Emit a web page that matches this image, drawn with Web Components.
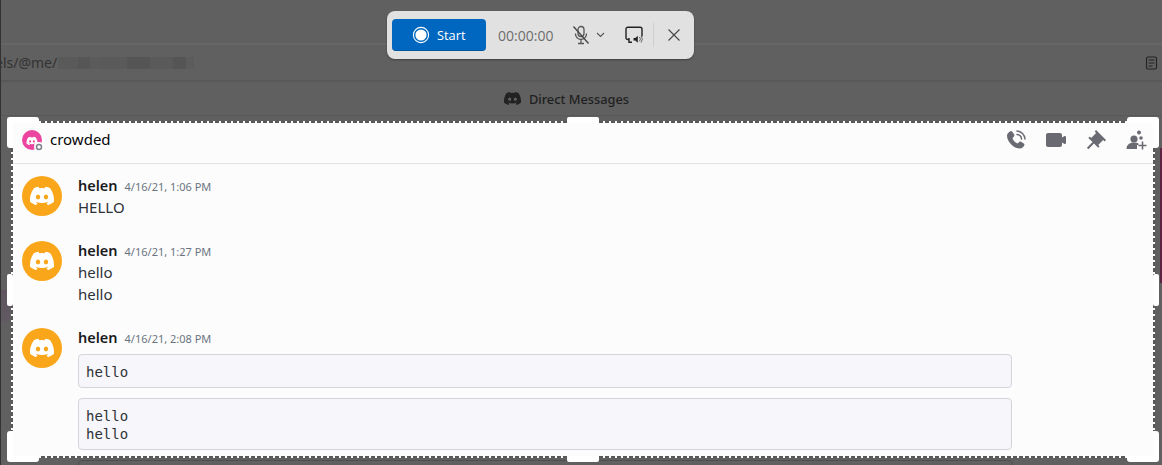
<!doctype html>
<html>
<head>
<meta charset="utf-8">
<title>crowded</title>
<style>
html, body { margin: 0; padding: 0; background: #606060; }
body { font-family: "Noto Sans", "Open Sans", sans-serif; }
</style>
</head>
<body>
<capture-screen>
    <page-backdrop></page-backdrop>
    <capture-selection>
        <chat-header slot="header" title-text="crowded"></chat-header>
        <chat-message name="helen" time="4/16/21, 1:06 PM">HELLO</chat-message>
        <chat-message name="helen" time="4/16/21, 1:27 PM">hello<br>hello</chat-message>
        <chat-message name="helen" time="4/16/21, 2:08 PM">
            <code-block>hello</code-block>
            <code-block>hello<br>hello</code-block>
        </chat-message>
    </capture-selection>
    <capture-toolbar></capture-toolbar>
</capture-screen>

<script>
const CLYDE = 'M20.317 4.37a19.791 19.791 0 0 0-4.885-1.515.074.074 0 0 0-.079.037c-.21.375-.444.864-.608 1.25a18.27 18.27 0 0 0-5.487 0 12.64 12.64 0 0 0-.617-1.25.077.077 0 0 0-.079-.037A19.736 19.736 0 0 0 3.677 4.37a.07.07 0 0 0-.032.027C.533 9.046-.32 13.58.099 18.057a.082.082 0 0 0 .031.057 19.9 19.9 0 0 0 5.993 3.03.078.078 0 0 0 .084-.028 14.09 14.09 0 0 0 1.226-1.994.076.076 0 0 0-.041-.106 13.107 13.107 0 0 1-1.872-.892.077.077 0 0 1-.008-.128 10.2 10.2 0 0 0 .372-.292.074.074 0 0 1 .077-.01c3.928 1.793 8.18 1.793 12.062 0a.074.074 0 0 1 .078.01c.12.098.246.198.373.292a.077.077 0 0 1-.006.127 12.299 12.299 0 0 1-1.873.892.077.077 0 0 0-.041.107c.36.698.772 1.362 1.225 1.993a.076.076 0 0 0 .084.028 19.839 19.839 0 0 0 6.002-3.03.077.077 0 0 0 .032-.054c.5-5.177-.838-9.674-3.549-13.66a.061.061 0 0 0-.031-.03zM8.02 15.33c-1.183 0-2.157-1.085-2.157-2.419 0-1.333.956-2.419 2.157-2.419 1.21 0 2.176 1.096 2.157 2.42 0 1.333-.956 2.418-2.157 2.418zm7.975 0c-1.183 0-2.157-1.085-2.157-2.419 0-1.333.955-2.419 2.157-2.419 1.21 0 2.176 1.096 2.157 2.42 0 1.333-.946 2.418-2.157 2.418z';

// root canvas, everything else sits on it
class CaptureScreen extends HTMLElement {
    constructor() {
        super();
        this.attachShadow({mode: 'open'});
        this.shadowRoot.innerHTML = `
            <style>
            :host {
                display: block;
                position: relative;
                width: 1162px;
                height: 465px;
                overflow: hidden;
                background: #606060;
            }
            </style>
            <slot></slot>
        `;
    }
}

// the dimmed browser window behind the capture overlay
class PageBackdrop extends HTMLElement {
    constructor() {
        super();
        this.attachShadow({mode: 'open'});
        const cells = [[20,'#5a5a5a'],[12,'#565656'],[10,'#5b5b5b'],[27,'#5a5a5a'],[23,'#555'],[23,'#5a5a5a'],[13,'#555'],[8,'#5c5c5c']];
        const mosaic = cells.map(c => `<i style="width:${c[0]}px;background:${c[1]}"></i>`).join('');
        this.shadowRoot.innerHTML = `
            <style>
            :host {
                display: flex;
                flex-direction: column;
                position: relative;
                height: 465px;
                background: #606060;
                border-left: 1px solid #333;
                box-sizing: border-box;
                color: #242424;
            }
            .top { height: 43px; flex: none; }
            .address {
                height: 39px;
                flex: none;
                box-sizing: border-box;
                border-top: 2px solid #666;
                border-bottom: 2px solid #585858;
                display: flex;
                align-items: center;
                font-size: 14px;
                overflow: hidden;
            }
            .url { margin-left: -6px; color: #333; }
            .mosaic { display: flex; height: 12px; margin-left: 1px; }
            .mosaic i { display: block; height: 12px; }
            .notes { margin-left: auto; margin-right: 3px; display: block; }
            .title {
                height: 34px;
                flex: none;
                box-sizing: border-box;
                border-bottom: 1px solid #585858;
                padding-right: 30px;
                display: flex;
                align-items: center;
                justify-content: center;
                gap: 8px;
                font-size: 12.8px;
                font-weight: 500;
                color: #1f1f1f;
            }
            .title svg { display: block; margin-top: -1px; }
            .rest { flex: 1; padding: 344px 149px 0 77px; overflow: hidden; }
            .ghost { height: 20px; border: 1px solid #4e4e4e; border-radius: 4px; }
            /* bits of the window behind showing through at the edges */
            .tint-l { position: absolute; left: 0; top: 290px; width: 9px; height: 32px; background: linear-gradient(#5f5560, #615a62); }
            .tint-r { position: absolute; right: 0; top: 148px; width: 2px; height: 135px; background: #5b2440; }
            </style>
            <div class="top"></div>
            <div class="address">
                <span class="url">els/@me/</span>
                <span class="mosaic">${mosaic}</span>
                <svg class="notes" width="14" height="14" viewBox="0 0 14 14" fill="none" stroke="#222" stroke-width="1.1">
                    <rect x="1.5" y="1" width="10" height="12" rx="1.5"/>
                    <path d="M3.5 4h6M3.500 7h6M3.500 10h4"/>
                </svg>
            </div>
            <div class="title">
                <svg width="17" height="17" viewBox="0 0 24 24" fill="#222"><path d="${CLYDE}"/></svg>
                <span>Direct Messages</span>
            </div>
            <div class="rest"><div class="ghost"></div></div>
            <div class="tint-l"></div>
            <div class="tint-r"></div>
        `;
    }
}

// Snipping tool bar floating over the capture
class CaptureToolbar extends HTMLElement {
    constructor() {
        super();
        this.attachShadow({mode: 'open'});
        this.shadowRoot.innerHTML = `
            <style>
            :host {
                position: absolute;
                left: 387px;
                top: 11px;
                width: 307px;
                height: 48px;
                box-sizing: border-box;
                padding: 0 0 0 5px;
                display: flex;
                align-items: center;
                background: #e1e1e1;
                border-radius: 8px;
                box-shadow: 0 1px 2px rgba(0,0,0,.35);
                font-family: "Open Sans", "Noto Sans", sans-serif;
            }
            .start {
                width: 94px;
                height: 32px;
                box-sizing: border-box;
                display: flex;
                align-items: center;
                padding-left: 20px;
                gap: 7px;
                background: #0067c0;
                border-radius: 4px;
                border-bottom: 1px solid #00569f;
                color: #fff;
                font-size: 12.8px;
            }
            .start svg { display: block; }
            .timer { margin-left: 12px; width: 56px; color: #6e6e6e; font-size: 14px; white-space: nowrap; }
            .mic { margin-left: 18px; display: block; }
            .chev { margin-left: 6px; display: block; }
            .screen { margin-left: 20px; display: block; }
            .sep { margin-left: 10px; width: 1px; height: 24px; background: #cfcfcf; }
            .close { margin-left: 13px; display: block; }
            </style>
            <div class="start">
                <svg width="18" height="18" viewBox="0 0 18 18">
                    <circle cx="9" cy="9" r="7.6" fill="none" stroke="#fff" stroke-width="1.1"/>
                    <circle cx="9" cy="9" r="5.6" fill="#fff"/>
                </svg>
                <span>Start</span>
            </div>
            <span class="timer">00:00:00</span>
            <svg class="mic" width="18" height="20" viewBox="0 0 18 20" fill="none" stroke="#555" stroke-width="1.3">
                <rect x="6" y="1.5" width="6" height="10" rx="3"/>
                <path d="M3.5 8.5v.5a5.5 5.5 0 0 0 11 0v-.5M9 14.5v3.500M6 18.500h6"/>
                <path d="M1.500 1.500l15 17" stroke="#444"/>
            </svg>
            <svg class="chev" width="9" height="6" viewBox="0 0 9 6" fill="none" stroke="#555" stroke-width="1.1"><path d="M1 1l3.500 3.500L8 1"/></svg>
            <svg class="screen" width="18" height="18" viewBox="0 0 18 18" fill="none" stroke="#222" stroke-width="1.4">
                <path d="M4 13.500H2.800A1.800 1.800 0 0 1 1 11.700V3a1.800 1.800 0 0 1 1.800-1.800h12.400A1.800 1.800 0 0 1 17 3v7.500"/>
                <path d="M4 12v4.300h3"/>
                <path d="M8.500 12h1.800l2.500-2.200v6.900l-2.500-2.200H8.500z" fill="#222" stroke="none"/>
                <path d="M14.300 11a3 3 0 0 1 0 4.400M16 10a5 5 0 0 1 0 6.500" stroke="#666" stroke-width="1"/>
            </svg>
            <span class="sep"></span>
            <svg class="close" width="14" height="14" viewBox="0 0 14 14" fill="none" stroke="#444" stroke-width="1.1"><path d="M1.500 1.500l11 11M12.500 1.500l-11 11"/></svg>
        `;
    }
}

// dashed selection rectangle with its white grab handles
class CaptureSelection extends HTMLElement {
    constructor() {
        super();
        this.attachShadow({mode: 'open'});
        this.shadowRoot.innerHTML = `
            <style>
            :host {
                position: absolute;
                left: 11px;
                top: 121px;
                width: 1144px;
                height: 337px;
                box-sizing: border-box;
                padding: 2px;
                background:
                    repeating-linear-gradient(90deg, #585858 0 4px, transparent 4px 6px) top / 100% 2px no-repeat,
                    repeating-linear-gradient(90deg, #585858 0 4px, transparent 4px 6px) bottom / 100% 2px no-repeat,
                    repeating-linear-gradient(0deg, #585858 0 4px, transparent 4px 6px) left / 2px 100% no-repeat,
                    repeating-linear-gradient(0deg, #585858 0 4px, transparent 4px 6px) right / 2px 100% no-repeat,
                    #fcfcfd;
                color: #2e3338;
                font-family: "Noto Sans", "Open Sans", sans-serif;
            }
            .clip { height: 100%; overflow: hidden; }
            .list { padding: 10px 0 0 9px; display: flex; flex-direction: column; gap: 21px; }
            .h { position: absolute; background: #fff; border-radius: 2px; }
            .c { position: absolute; width: 32px; height: 31px; box-sizing: border-box; border: 0 solid #fff; border-radius: 3px; }
            .tl { left: -4px; top: -4px; border-width: 6px 0 0 6px; }
            .tr { right: -4px; top: -4px; border-width: 6px 6px 0 0; }
            .bl { left: -4px; bottom: -4px; border-width: 0 0 6px 6px; }
            .br { right: -4px; bottom: -4px; border-width: 0 6px 6px 0; }
            .mt { left: 556px; top: -4px; width: 32px; height: 6px; }
            .mb { left: 556px; bottom: -4px; width: 32px; height: 6px; }
            .ml { left: -4px; top: 153px; width: 6px; height: 32px; }
            .mr { right: -4px; top: 153px; width: 6px; height: 32px; }
            </style>
            <div class="clip">
                <slot name="header"></slot>
                <div class="list"><slot></slot></div>
            </div>
            <div class="c tl"></div><div class="c tr"></div><div class="c bl"></div><div class="c br"></div>
            <div class="h mt"></div><div class="h mb"></div><div class="h ml"></div><div class="h mr"></div>
        `;
    }
}

class ChatHeader extends HTMLElement {
    constructor() {
        super();
        this.attachShadow({mode: 'open'});
        this.shadowRoot.innerHTML = `
            <style>
            :host {
                display: flex;
                align-items: center;
                height: 41px;
                box-sizing: border-box;
                padding: 0 5px 7px 9px;
                border-bottom: 1px solid #e2e2e4;
                color: #060607;
            }
            .badge { position: relative; width: 20px; height: 20px; flex: none; }
            .badge svg { display: block; overflow: visible; }
            .name { margin-left: 8px; margin-top: -1px; font-size: 15px; font-weight: 400; }
            .tools { margin-left: auto; display: flex; gap: 16px; }
            .tools svg { display: block; width: 24px; height: 24px; fill: #6a6a73; }
            </style>
            <div class="badge">
                <svg width="20" height="20" viewBox="0 0 20 20">
                    <circle cx="10" cy="10" r="10" fill="#eb459f"/>
                    <svg x="4.5" y="5.500" width="11" height="11" viewBox="0 0 24 24"><path fill="#fff" d="${CLYDE}"/></svg>
                    <circle cx="17" cy="17" r="5" fill="#fcfcfd"/>
                    <circle cx="17" cy="17" r="2.500" fill="none" stroke="#80848e" stroke-width="1.500"/>
                </svg>
            </div>
            <span class="name">${this.getAttribute('title-text')}</span>
            <div class="tools">
                <svg viewBox="0 0 24 24">
                    <path d="M6.600 3.200c.6-.3 1.300-.1 1.700.5l1.900 2.900c.3.5.3 1.100-.1 1.600L8.900 9.700c-.3.3-.3.7-.2 1 .8 2 2.400 3.700 4.400 4.600.4.2.8.1 1.100-.2l1.300-1.300c.5-.4 1.100-.5 1.600-.1l2.700 1.800c.6.4.8 1.100.5 1.700-.8 1.900-2.300 3.300-4.500 3.300C9.700 20.500 3 13.600 3 7.700c0-2 1.700-3.700 3.600-4.500z"/>
                    <path d="M13 3a8.500 8.500 0 0 1 8 8M13 6.500a5 5 0 0 1 4.500 4.500" fill="none" stroke="#6a6a73" stroke-width="1.500" stroke-linecap="round"/>
                </svg>
                <svg viewBox="0 0 24 24"><path d="M21.526 8.149C21.231 7.966 20.862 7.951 20.553 8.105L18 9.382V7C18 5.897 17.103 5 16 5H4C2.897 5 2 5.897 2 7V17C2 18.104 2.897 19 4 19H16C17.103 19 18 18.104 18 17V14.618L20.553 15.894C20.694 15.965 20.847 16 21 16C21.183 16 21.365 15.949 21.526 15.851C21.820 15.668 22 15.347 22 15V9C22 8.653 21.820 8.332 21.526 8.149Z"/></svg>
                <svg viewBox="0 0 24 24"><path d="M22 12L12.101 2.10101L10.686 3.51401L12.101 4.92901L7.15096 9.87801V9.88001L5.73596 8.46501L4.32196 9.88001L8.56496 14.122L2.90796 19.778L4.32196 21.192L9.97896 15.536L14.222 19.778L15.636 18.364L14.222 16.950L19.171 12H19.172L20.586 13.414L22 12Z"/></svg>
                <svg viewBox="0 0 24 24">
                    <circle cx="10" cy="11" r="3.600"/>
                    <circle cx="15" cy="4.500" r="2"/>
                    <circle cx="17" cy="10" r="1.800"/>
                    <path d="M2.500 21c0-4 3-6.500 7.500-6.500 1.800 0 3.300.4 4.500 1.100v1.400H13v4z"/>
                    <path d="M18.500 13.500v8M14.500 17.500h8" fill="none" stroke="#6a6a73" stroke-width="1.600"/>
                </svg>
            </div>
        `;
    }
}

class ChatMessage extends HTMLElement {
    constructor() {
        super();
        this.attachShadow({mode: 'open'});
        this.shadowRoot.innerHTML = `
            <style>
            :host {
                display: grid;
                grid-template-columns: 40px 934px;
                column-gap: 16px;
                font-size: 15px;
                line-height: 22px;
            }
            .avatar {
                width: 40px;
                height: 40px;
                margin-top: 2px;
                border-radius: 50%;
                background: #faa61a;
                display: flex;
                align-items: center;
                justify-content: center;
            }
            .avatar svg { display: block; }
            .meta { height: 22px; overflow: hidden; }
            .name { font-size: 14.5px; font-weight: 600; color: #1a1a1e; }
            .time { margin-left: 7px; font-size: 11px; color: #6a7480; }
            </style>
            <div class="avatar">
                <svg width="24" height="24" viewBox="0 0 24 24"><path fill="#fff" d="${CLYDE}"/></svg>
            </div>
            <div>
                <div class="meta"><span class="name">${this.getAttribute('name')}</span><span class="time">${this.getAttribute('time')}</span></div>
                <slot></slot>
            </div>
        `;
    }
}

class CodeBlock extends HTMLElement {
    constructor() {
        super();
        this.attachShadow({mode: 'open'});
        this.shadowRoot.innerHTML = `
            <style>
            :host {
                display: block;
                margin-top: 6px;
                margin-bottom: 10px;
                padding: 8px 7px 6px;
                background: #f6f6fb;
                border: 1px solid #d4d4dc;
                border-radius: 4px;
                font-family: "DejaVu Sans Mono", "Liberation Mono", monospace;
                font-size: 14px;
                line-height: 18px;
                color: #2e3338;
            }
            </style>
            <slot></slot>
        `;
    }
}

customElements.define('capture-screen', CaptureScreen);
customElements.define('page-backdrop', PageBackdrop);
customElements.define('capture-toolbar', CaptureToolbar);
customElements.define('capture-selection', CaptureSelection);
customElements.define('chat-header', ChatHeader);
customElements.define('chat-message', ChatMessage);
customElements.define('code-block', CodeBlock);
</script>
</body>
</html>
